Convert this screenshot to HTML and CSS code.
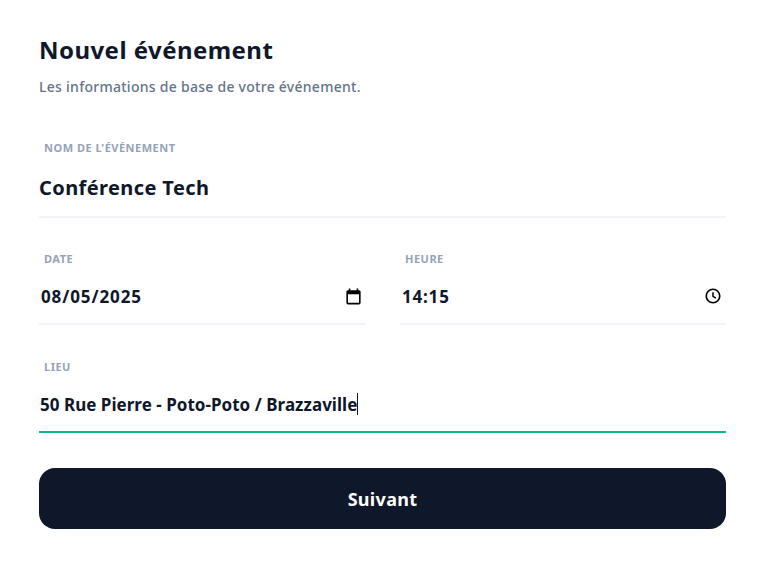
FILE: index.html
```html
<!DOCTYPE html>
<html lang="fr">
<head>
  <meta charset="UTF-8">
  <meta name="viewport" content="width=device-width, initial-scale=1.0">
  <title>Nouvel événement</title>
  <link rel="stylesheet" href="styles.css">
</head>
<body>
  <form class="event-form">
    <h1>Nouvel événement</h1>
    <p class="subtitle">Les informations de base de votre événement.</p>

    <div class="field field-name">
      <label>Nom de l'événement</label>
      <div class="value value-large">Conférence Tech</div>
    </div>

    <div class="field-row">
      <div class="field">
        <label>Date</label>
        <div class="value value-picker value-date">
          <span>08/05/2025</span>
          <svg class="icon-date" viewBox="0 0 24 24" width="19" height="19">
            <path fill="currentColor" d="M19 4h-1V2h-2v2H8V2H6v2H5c-1.1 0-2 .9-2 2v14c0 1.1.9 2 2 2h14c1.1 0 2-.9 2-2V6c0-1.1-.9-2-2-2zm0 16H5V9h14v11z"/>
          </svg>
        </div>
      </div>
      <div class="field">
        <label>Heure</label>
        <div class="value value-picker value-time">
          <span>14:15</span>
          <svg class="icon-time" viewBox="0 0 24 24" width="18" height="18">
            <circle cx="12" cy="12" r="9" fill="none" stroke="currentColor" stroke-width="2.2"/>
            <path fill="none" stroke="currentColor" stroke-width="2" d="M12 7v5.4l3.8 2.3"/>
          </svg>
        </div>
      </div>
    </div>

    <div class="field field-focus">
      <label>Lieu</label>
      <div class="value value-place">50 Rue Pierre - Poto-Poto / Brazzaville<span class="caret"></span></div>
    </div>

    <button type="button" class="next">Suivant</button>
  </form>
</body>
</html>
```

FILE: styles.css
```css
* {
  margin: 0;
  padding: 0;
  box-sizing: border-box;
}

body {
  font-family: "Noto Sans", "Open Sans", sans-serif;
  background-color: #fff;
  color: #0f172a;
}

.event-form {
  width: 687px;
  margin-left: 39px;
  padding-top: 33px;
}

h1 {
  font-size: 24px;
  line-height: 34px;
  font-weight: 700;
  letter-spacing: 0.45px;
}

.subtitle {
  font-size: 14px;
  line-height: 20px;
  margin-top: 10px;
  color: #64748b;
  font-weight: 500;
  letter-spacing: 0.27px;
}

.field {
  flex: 1;
  border-bottom: 2px solid #f1f5f9;
}

.field label {
  display: block;
  padding-left: 5px;
  font-size: 11px;
  line-height: 14px;
  font-weight: 700;
  letter-spacing: 0.5px;
  text-transform: uppercase;
  color: #94a3b8;
}

.field-name {
  margin-top: 44px;
  height: 77px;
}

.value {
  display: flex;
  align-items: center;
  height: 40px;
  margin-top: 10px;
  font-size: 17px;
  font-weight: 700;
}

.value-large {
  font-size: 20px;
  letter-spacing: 0.4px;
  height: 44px;
}

.value-picker {
  justify-content: space-between;
  padding-left: 2px;
}

.value-date {
  letter-spacing: 0.9px;
  padding-right: 2px;
}

.value-time {
  letter-spacing: 0.8px;
  padding-right: 4px;
}

.value-place {
  letter-spacing: 0.03px;
  padding-left: 1px;
}

.icon-date,
.icon-time {
  color: #000;
  flex: none;
}

.field-row {
  display: flex;
  gap: 35px;
  margin-top: 34px;
}

.field-row .field {
  height: 73px;
}

.field-focus {
  margin-top: 35px;
  height: 73px;
  border-bottom-color: #10b981;
}

.caret {
  width: 1px;
  height: 22px;
  background-color: #0f172a;
}

.next {
  display: block;
  width: 100%;
  height: 61px;
  margin-top: 35px;
  border: none;
  border-radius: 16px;
  background-color: #0f172a;
  color: #fff;
  font-family: inherit;
  font-size: 18px;
  font-weight: 700;
  letter-spacing: 0.3px;
}
```
